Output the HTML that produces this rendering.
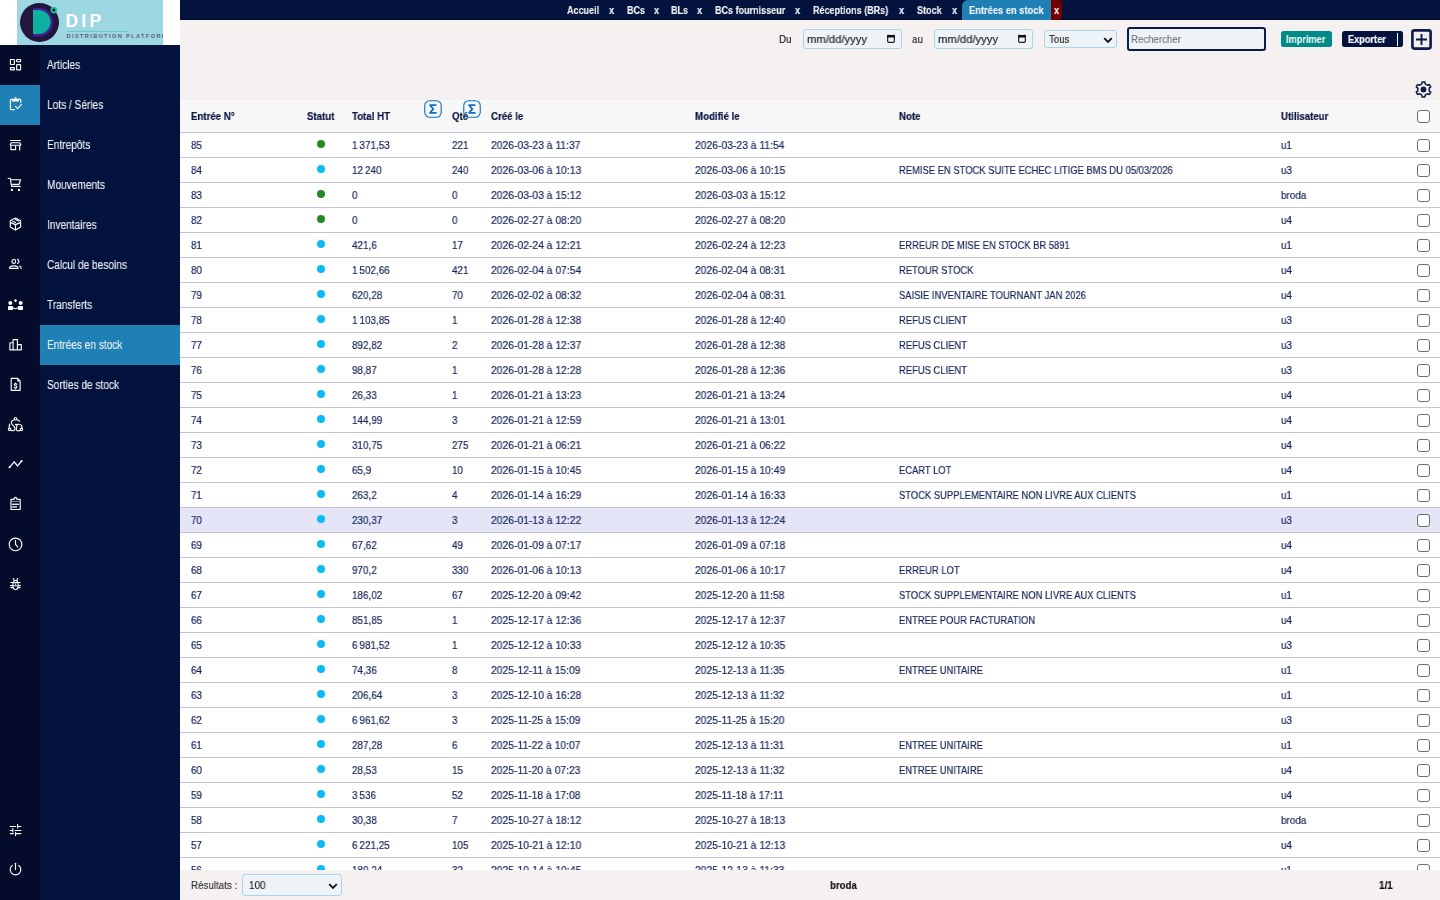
<!DOCTYPE html>
<html><head><meta charset="utf-8"><title>DIP - Entrées en stock</title>
<style>
*{box-sizing:border-box;margin:0;padding:0}
html,body{width:1440px;height:900px;overflow:hidden;background:#fff;font-family:"Liberation Sans",sans-serif;}
.abs{position:absolute}
.t{position:absolute;white-space:nowrap;display:block;transform-origin:0 50%;will-change:transform;-webkit-text-stroke-width:.15px}
#icons{position:absolute;left:0;top:45px;width:40px;height:855px;background:#050c2b}
#menu{position:absolute;left:40px;top:45px;width:140px;height:855px;background:#03133d}
#logo{position:absolute;left:0;top:0;width:180px;height:45px;background:#fff}
#logobox{position:absolute;left:17px;top:0;width:146px;height:45px;background:#9dd7e2;overflow:hidden}
.ic{position:absolute;left:5px;width:22px;height:22px}
.mi{position:absolute;left:0;width:140px;height:40px;color:#eceef4;font-size:12.5px;line-height:40px;-webkit-text-stroke:.15px #eceef4}
.mi span{position:absolute;left:6.5px;top:0;transform:scaleX(.81);transform-origin:0 50%;white-space:nowrap;will-change:transform}
#topbar{position:absolute;left:180px;top:0;width:1260px;height:20px;background:#03133d;border-bottom:1px solid #020a26}
.tab{position:absolute;top:0;height:20px;line-height:20px;color:#f2f2f6;font-weight:bold;font-size:11.5px;-webkit-text-stroke:.15px #f2f2f6;white-space:nowrap;transform-origin:0 50%;will-change:transform}
#toolbar{position:absolute;left:180px;top:20px;width:1260px;height:80px;background:#f5f1f0}
#thead{position:absolute;left:180px;top:100px;width:1260px;height:33px;background:#f7f7f7;border-bottom:1px solid #c6c2da}
.th{position:absolute;top:0;line-height:32px;font-size:11px;font-weight:bold;color:#0a1542;-webkit-text-stroke:.2px #0a1542;white-space:nowrap;transform:scaleX(.88);transform-origin:0 50%;will-change:transform}
#tbody{position:absolute;left:180px;top:133px;width:1260px;height:737px;overflow:hidden;background:#fff}
.r{position:absolute;left:0;width:1260px;height:25px;border-bottom:1px solid #c6c2da}
.r.hl{background:#e5e5f8}
.c{position:absolute;top:0;line-height:24px;font-size:11px;color:#16255a;will-change:transform;-webkit-text-stroke:.2px #16255a;white-space:nowrap;transform-origin:0 50%}
.n{transform:scaleX(.9)}
.d{transform:scaleX(.94)}
.u{transform:scaleX(.855)}
.dot{position:absolute;left:137px;top:7px;width:8px;height:8px;border-radius:50%}
.dg{background:#238a23}.db{background:#0bbcf4}
.cb{position:absolute;left:1237px;top:6px;width:13px;height:13px;border:1px solid #6e6e6e;border-radius:3px;background:#fff}
#footer{position:absolute;left:180px;top:870px;width:1260px;height:30px;background:#f5f1f0}
.inp{position:absolute;background:#edf3f7;border:1px solid #a9d3e6;border-radius:3px}
</style></head><body>

<div id="logo"><div id="logobox">
<svg width="146" height="45" viewBox="0 0 146 45" style="position:absolute;left:0;top:0">
<circle cx="22.5" cy="22.4" r="19.5" fill="#22163f"/>
<path d="M16 8H22A14.2 14.2 0 0 1 22 36.4H16Z" fill="#3a2490"/>
<path d="M16 9.9H21.5A12.05 12.05 0 0 1 21.5 34H16Z" fill="#0cb1a0"/>
<circle cx="36.8" cy="10.1" r="3.3" fill="#13c9a8"/>
<circle cx="36.8" cy="10.1" r="1.5" fill="#111"/>
<rect x="49" y="31" width="62.5" height="1" fill="#6cc9cc"/>
</svg>
<div class="abs" style="left:48.5px;top:10px;font-size:17.5px;line-height:22px;color:#fff;font-weight:bold;letter-spacing:3.2px;">DIP</div>
<div class="abs" style="left:49.5px;top:32px;font-size:5.6px;line-height:8px;color:#5a5c80;font-weight:bold;letter-spacing:1.4px;white-space:nowrap">DISTRIBUTION PLATFORM</div>
</div></div>

<div id="icons">
<div class="abs" style="left:0;top:40px;width:40px;height:40px;background:#1e80b4"></div>
<svg class="ic" style="top:10px" viewBox="0 0 22 22"><g stroke="#fff" fill="none" stroke-width="1.15" stroke-linecap="round" stroke-linejoin="round"><rect x="5.45" y="4.45" width="3.9" height="5.0" rx=".4"/><rect x="11.65" y="4.45" width="3.9" height="2.3" rx=".4"/><rect x="5.45" y="12.55" width="3.9" height="2.3" rx=".4"/><rect x="11.65" y="9.55" width="3.9" height="5.3" rx=".4"/></g></svg>
<svg class="ic" style="top:50px" viewBox="0 0 22 22"><g stroke="#fff" fill="none" stroke-width="1.15" stroke-linecap="round" stroke-linejoin="round"><path d="M7.2 4.3H6.2Q5.4 4.3 5.4 5.1V13.8Q5.4 14.6 6.2 14.6H9.5"/><path d="M13.9 4.3H15Q15.8 4.3 15.8 5.1V7.5"/><path d="M10.4 11.3L12.6 13.6L16.6 9.4"/></g><path fill="#fff" d="M6.9 3.8H9.4Q9.6 2 10.5 2Q11.4 2 11.6 3.8H14.2L14 6.6H7.1Z"/><circle cx="10.5" cy="3.5" r=".45" fill="#1e80b4"/></svg>
<svg class="ic" style="top:89px" viewBox="0 0 22 22"><g stroke="#fff" fill="none" stroke-width="1.15" stroke-linecap="round" stroke-linejoin="round"><path d="M5.6 6.5H15.4"/><path d="M6.2 8.7H14.8L15.8 10.4Q15.8 11.2 15 11.2H6Q5.3 11.2 5.3 10.4Z"/><path d="M5.9 11.3V15.6H10.6V12"/><path d="M14.7 11.3V16.1"/></g></svg>
<svg class="ic" style="top:129px" viewBox="0 0 22 22"><g stroke="#fff" fill="none" stroke-width="1.15" stroke-linecap="round" stroke-linejoin="round"><path d="M3.2 4.3L5.3 4.5L6.6 12.4H15.2"/><path d="M5.8 5.7H15.6L14.1 10.3H7.3"/></g><rect x="5.9" y="14.9" width="2" height="2" fill="#fff"/><rect x="13" y="14.9" width="2" height="2" fill="#fff"/></svg>
<svg class="ic" style="top:169px" viewBox="0 0 22 22"><g stroke="#fff" fill="none" stroke-width="1.15" stroke-linecap="round" stroke-linejoin="round"><path d="M10.5 4L15.6 6.8V13.1L10.5 16L5.3 13.1V6.8Z"/><path d="M5.6 8.6L10.5 10.6L15.3 8.6M10.5 10.6V15.8M7.7 7.3L10.6 8.6M10.5 5.6L13.4 7.1"/></g></svg>
<svg class="ic" style="top:209px" viewBox="0 0 22 22"><g stroke="#fff" fill="none" stroke-width="1.15" stroke-linecap="round" stroke-linejoin="round"><circle cx="8.8" cy="7.4" r="1.9"/><path d="M12.5 5.4A2.1 2.1 0 0 1 12.5 9.4"/><path d="M4.6 14.3Q4.3 11.9 8.8 11.9Q13.3 11.9 13.1 14.3Z"/><path d="M14.8 11.9Q16.2 12.6 16.2 14.5"/></g></svg>
<svg class="ic" style="top:249px" viewBox="0 0 22 22"><g fill="#fff"><circle cx="5.3" cy="8.9" r="2"/><circle cx="15.7" cy="8.9" r="2"/><rect x="3" y="12" width="5" height="4" rx=".4"/><rect x="13" y="12" width="5" height="4" rx=".4"/><path d="M10.5 5L12.2 6.5L10.5 8.3L8.8 6.5Z"/></g><path d="M8 13.6Q10.5 15.8 13 13.6" stroke="#fff" stroke-width="1.1" fill="none"/></svg>
<svg class="ic" style="top:289px" viewBox="0 0 22 22"><g stroke="#fff" fill="none" stroke-width="1.15" stroke-linecap="round" stroke-linejoin="round"><path d="M4.9 15.8V8.7H8.1V15.8ZM8.1 15.8V5.6H12.4V15.8ZM12.4 15.8V10.6H16.3V15.8Z"/></g></svg>
<svg class="ic" style="top:329px" viewBox="0 0 22 22"><g stroke="#fff" fill="none" stroke-width="1.15" stroke-linecap="round" stroke-linejoin="round"><path d="M6.2 4.4H12.6L15.1 7.2V16.3H6.2Z"/><path d="M11.8 10.4Q11.5 9.6 10.5 9.6Q9.3 9.6 9.3 10.6Q9.3 11.5 10.5 11.7Q11.8 11.9 11.8 13Q11.8 14 10.5 14Q9.5 14 9.2 13.3M10.5 9V9.6M10.5 14V14.8"/></g><path d="M12.3 4.3L15.3 7.4H12.3Z" fill="#fff"/></svg>
<svg class="ic" style="top:369px" viewBox="0 0 22 22"><g stroke="#fff" fill="none" stroke-width="1.15" stroke-linecap="round" stroke-linejoin="round"><circle cx="10.5" cy="4.7" r="1.25"/><circle cx="4.6" cy="15.3" r="1.25"/><circle cx="16.4" cy="15.3" r="1.25"/><path d="M9.2 5.9C7.2 6.2 6 7.5 6.5 9.4C7 11 9.5 12.3 9.9 14C10.2 15.5 9.8 16.5 8.5 16.7L5.7 16.4"/><path d="M11.8 5.9Q13.8 6 14.6 7.2"/><path d="M10.4 10.6C13 10.1 15.6 9.6 16.6 11.5Q17.2 12.8 16.6 14.1"/><path d="M12.1 10.8C11.7 12.5 11.3 14.5 11.4 16Q11.6 16.9 13 16.9L15.3 16.5"/><path d="M4.2 14.1Q3.9 11.5 4.8 10.2"/></g></svg>
<svg class="ic" style="top:408px" viewBox="0 0 22 22"><path d="M4.5 14.3L9.2 8.8L12.5 12.9L16.6 8" stroke="#fff" stroke-width="1.3" fill="none" stroke-linecap="round" stroke-linejoin="round"/><circle cx="4.5" cy="14.3" r="1" fill="#fff"/><circle cx="16.6" cy="8" r="1" fill="#fff"/></svg>
<svg class="ic" style="top:448px" viewBox="0 0 22 22"><g stroke="#fff" fill="none" stroke-width="1.15" stroke-linecap="round" stroke-linejoin="round"><path d="M6 6.4H9Q9.3 4.4 10.5 4.4Q11.7 4.4 12 6.4H15.2V16.5H6Z"/></g><g fill="#fff"><rect x="7.1" y="7.9" width="6.8" height=".9" opacity=".6"/><rect x="7.1" y="10.6" width="6.8" height="1.3"/><rect x="7.1" y="13.3" width="5" height="1.3"/></g></svg>
<svg class="ic" style="top:488px" viewBox="0 0 22 22"><g stroke="#fff" fill="none" stroke-width="1.15" stroke-linecap="round" stroke-linejoin="round"><circle cx="10.5" cy="11.4" r="6.3"/><path d="M10.5 7.6V11.3L12.7 13.8"/></g></svg>
<svg class="ic" style="top:528px" viewBox="0 0 22 22"><g stroke="#fff" fill="none" stroke-width="1.15" stroke-linecap="round" stroke-linejoin="round"><ellipse cx="10.5" cy="12.1" rx="2.6" ry="4.6"/><path d="M8.4 5.6L9.3 7.4M12.6 5.6L11.7 7.4M5.8 9.5H8M13 9.5H15.2M5.6 12.6H7.7M13.3 12.6H15.4M5.8 14.6H8M13 14.6H15.2M9.3 9.6H11.7M9.3 12.7H11.7"/></g><circle cx="10.5" cy="11.2" r=".6" fill="#fff"/></svg>
<svg class="ic" style="top:774px" viewBox="0 0 22 22"><g stroke="#fff" fill="none" stroke-width="1.15" stroke-linecap="round" stroke-linejoin="round"><path d="M5.3 7.5H10.7M12.7 7.5H15.8M12.6 5.6V9M5.3 11.5H7.5M10.2 11.5H15.8M7.8 9.5V13M5.3 14.6H8.4M10.6 14.6H15.8M10.6 13.2V16.6"/></g></svg>
<svg class="ic" style="top:813px" viewBox="0 0 22 22"><g stroke="#fff" fill="none" stroke-width="1.15" stroke-linecap="round" stroke-linejoin="round"><path d="M7.3 7.4A5.3 5.3 0 1 0 13.7 7.4"/><path d="M10.5 5.3V11.6"/></g></svg>
</div>
<div id="menu">
<div class="mi" style="top:0px;"><span>Articles</span></div>
<div class="mi" style="top:40px;"><span>Lots / Séries</span></div>
<div class="mi" style="top:80px;"><span>Entrepôts</span></div>
<div class="mi" style="top:120px;"><span>Mouvements</span></div>
<div class="mi" style="top:160px;"><span>Inventaires</span></div>
<div class="mi" style="top:200px;"><span>Calcul de besoins</span></div>
<div class="mi" style="top:240px;"><span>Transferts</span></div>
<div class="mi" style="top:280px;background:#1e80b4;"><span>Entrées en stock</span></div>
<div class="mi" style="top:320px;"><span>Sorties de stock</span></div>
</div>
<div id="topbar">
<div class="abs" style="left:782px;top:0;width:89px;height:20px;background:#1e80b4;border-radius:6px 0 0 0"></div>
<div class="abs" style="left:871px;top:0;width:11px;height:20px;background:#730000;border-radius:0 4px 4px 0"></div>
<div class="tab" style="left:386.8px;transform:scaleX(.785);">Accueil</div>
<div class="tab" style="left:429.4px;transform:scaleX(.8);">x</div>
<div class="tab" style="left:446.7px;transform:scaleX(.785);">BCs</div>
<div class="tab" style="left:473.5px;transform:scaleX(.8);">x</div>
<div class="tab" style="left:491.0px;transform:scaleX(.785);">BLs</div>
<div class="tab" style="left:517.2px;transform:scaleX(.8);">x</div>
<div class="tab" style="left:534.9px;transform:scaleX(.785);">BCs fournisseur</div>
<div class="tab" style="left:615.2px;transform:scaleX(.8);">x</div>
<div class="tab" style="left:632.8px;transform:scaleX(.785);">Réceptions (BRs)</div>
<div class="tab" style="left:719.0px;transform:scaleX(.8);">x</div>
<div class="tab" style="left:736.7px;transform:scaleX(.785);">Stock</div>
<div class="tab" style="left:771.6px;transform:scaleX(.8);">x</div>
<div class="tab" style="left:789.4px;transform:scaleX(.81)">Entrées en stock</div>
<div class="tab" style="left:874.2px;transform:scaleX(.8)">x</div>
</div>
<div id="toolbar">
<div class="t" style="left:599px;top:9px;line-height:20px;font-size:11.5px;color:#222;transform:scaleX(.85)">Du</div>
<div class="inp" style="left:623px;top:9px;width:99px;height:20px"><div class="t" style="left:3px;top:0;line-height:18px;font-size:11.5px;color:#222;transform:scaleX(.98)">mm/dd/yyyy</div><svg width="8" height="9" viewBox="0 0 8 9" style="position:absolute;right:6px;top:4px"><rect x=".65" y="1.9" width="6.7" height="6.4" rx="1" fill="none" stroke="#222" stroke-width="1.2"/><path d="M.1 3.6V1.6Q.1 .4 1.3 .8Q4 1.4 6.7 .8Q7.9 .4 7.9 1.6V3.6Z" fill="#111"/></svg></div>
<div class="t" style="left:732px;top:9px;line-height:20px;font-size:11.5px;color:#222;transform:scaleX(.85)">au</div>
<div class="inp" style="left:754px;top:9px;width:99px;height:20px"><div class="t" style="left:3px;top:0;line-height:18px;font-size:11.5px;color:#222;transform:scaleX(.98)">mm/dd/yyyy</div><svg width="8" height="9" viewBox="0 0 8 9" style="position:absolute;right:6px;top:4px"><rect x=".65" y="1.9" width="6.7" height="6.4" rx="1" fill="none" stroke="#222" stroke-width="1.2"/><path d="M.1 3.6V1.6Q.1 .4 1.3 .8Q4 1.4 6.7 .8Q7.9 .4 7.9 1.6V3.6Z" fill="#111"/></svg></div>
<div class="inp" style="left:864px;top:10px;width:73px;height:18px"><div class="t" style="left:4px;top:0;line-height:16px;font-size:11.5px;color:#222;transform:scaleX(.84)">Tous</div><svg width="10" height="7" viewBox="0 0 10 7" style="position:absolute;left:58px;top:5.5px"><path d="M1.2 1.2L5 5L8.8 1.2" fill="none" stroke="#111" stroke-width="1.8"/></svg></div>
<div class="abs" style="left:947px;top:7px;width:139px;height:24px;background:#edf3f7;border:2px solid #0a1a4a;border-radius:3px"><div class="t" style="left:2px;top:0;line-height:20px;font-size:11.5px;color:#777;transform:scaleX(.84)">Rechercher</div></div>
<div class="abs" style="left:1101px;top:11px;width:51px;height:16px;background:#008b89;border-radius:2.5px"><div class="t" style="left:4.5px;top:0;line-height:16px;font-size:11.5px;font-weight:bold;color:#e6f4f2;-webkit-text-stroke:.15px #e6f4f2;transform:scaleX(.8)">Imprimer</div></div>
<div class="abs" style="left:1162px;top:11px;width:61px;height:16px;background:#03133d;border-radius:2.5px"><div class="t" style="left:5.5px;top:0;line-height:16px;font-size:11.5px;font-weight:bold;color:#f6f6fa;-webkit-text-stroke:.2px #f6f6fa;transform:scaleX(.8)">Exporter</div><div class="abs" style="left:55px;top:1.5px;width:1px;height:13px;background:#fff"></div></div>
<svg class="abs" style="left:1231px;top:9px" width="21" height="21" viewBox="0 0 21 21"><rect x="1.4" y="1.4" width="18.2" height="18.2" rx="2" fill="#f0eeee" stroke="#0a1a4a" stroke-width="2.6"/><path d="M10.5 5V16M5 10.5H16" stroke="#0a1a4a" stroke-width="1.9"/></svg>
<svg class="abs" style="left:1232px;top:58px" width="22" height="22" viewBox="0 0 22 22"><path fill="none" stroke="#0a1a4a" stroke-width="1.5" stroke-linejoin="round" d="M8.70 6.65L9.78 5.86L10.16 3.92L12.84 3.92L13.22 5.86L14.30 6.65L15.52 7.19L17.40 6.55L18.74 8.87L17.25 10.17L17.10 11.50L17.25 12.83L18.74 14.13L17.40 16.45L15.52 15.81L14.30 16.35L13.22 17.14L12.84 19.08L10.16 19.08L9.78 17.14L8.70 16.35L7.48 15.81L5.60 16.45L4.26 14.13L5.75 12.83L5.90 11.50L5.75 10.17L4.26 8.87L5.60 6.55L7.48 7.19Z"/><circle cx="11.5" cy="11.5" r="2.9" fill="#0a1a4a"/></svg>
</div>
<div id="thead">
<div class="th" style="left:11px">Entrée N°</div>
<div class="th" style="left:127px">Statut</div>
<div class="th" style="left:172px">Total HT</div>
<div class="th" style="left:272px">Qté</div>
<div class="th" style="left:311px">Créé le</div>
<div class="th" style="left:515px">Modifié le</div>
<div class="th" style="left:719px">Note</div>
<div class="th" style="left:1101px">Utilisateur</div>
<svg class="abs" style="left:244px;top:0;z-index:3" width="18" height="18" viewBox="0 0 18 18"><rect x=".75" y=".75" width="16.5" height="16.5" rx="5" fill="none" stroke="#0b6fc6" stroke-width="1.1"/><path d="M5.4 4.2H12.4V6H7.9L10.5 9L7.9 12H12.6V13.8H5.3V12.2L8.1 9L5.4 5.8Z" fill="#0b6fc6"/></svg>
<svg class="abs" style="left:283px;top:0;z-index:3" width="18" height="18" viewBox="0 0 18 18"><rect x=".75" y=".75" width="16.5" height="16.5" rx="5" fill="none" stroke="#0b6fc6" stroke-width="1.1"/><path d="M5.4 4.2H12.4V6H7.9L10.5 9L7.9 12H12.6V13.8H5.3V12.2L8.1 9L5.4 5.8Z" fill="#0b6fc6"/></svg>
<div class="cb" style="top:10px"></div>
</div>
<div id="tbody">
<div class="r" style="top:0px"><span class="c n" style="left:11px">85</span><span class="dot dg"></span><span class="c n" style="left:172px">1&#8201;371,53</span><span class="c n" style="left:272px">221</span><span class="c d" style="left:311px">2026-03-23 à 11:37</span><span class="c d" style="left:515px">2026-03-23 à 11:54</span><span class="c n" style="left:1101px">u1</span><span class="cb"></span></div>
<div class="r" style="top:25px"><span class="c n" style="left:11px">84</span><span class="dot db"></span><span class="c n" style="left:172px">12&#8201;240</span><span class="c n" style="left:272px">240</span><span class="c d" style="left:311px">2026-03-06 à 10:13</span><span class="c d" style="left:515px">2026-03-06 à 10:15</span><span class="c u" style="left:719px">REMISE EN STOCK SUITE ECHEC LITIGE BMS DU 05/03/2026</span><span class="c n" style="left:1101px">u3</span><span class="cb"></span></div>
<div class="r" style="top:50px"><span class="c n" style="left:11px">83</span><span class="dot dg"></span><span class="c n" style="left:172px">0</span><span class="c n" style="left:272px">0</span><span class="c d" style="left:311px">2026-03-03 à 15:12</span><span class="c d" style="left:515px">2026-03-03 à 15:12</span><span class="c n" style="left:1101px">broda</span><span class="cb"></span></div>
<div class="r" style="top:75px"><span class="c n" style="left:11px">82</span><span class="dot dg"></span><span class="c n" style="left:172px">0</span><span class="c n" style="left:272px">0</span><span class="c d" style="left:311px">2026-02-27 à 08:20</span><span class="c d" style="left:515px">2026-02-27 à 08:20</span><span class="c n" style="left:1101px">u4</span><span class="cb"></span></div>
<div class="r" style="top:100px"><span class="c n" style="left:11px">81</span><span class="dot db"></span><span class="c n" style="left:172px">421,6</span><span class="c n" style="left:272px">17</span><span class="c d" style="left:311px">2026-02-24 à 12:21</span><span class="c d" style="left:515px">2026-02-24 à 12:23</span><span class="c u" style="left:719px">ERREUR DE MISE EN STOCK BR 5891</span><span class="c n" style="left:1101px">u1</span><span class="cb"></span></div>
<div class="r" style="top:125px"><span class="c n" style="left:11px">80</span><span class="dot db"></span><span class="c n" style="left:172px">1&#8201;502,66</span><span class="c n" style="left:272px">421</span><span class="c d" style="left:311px">2026-02-04 à 07:54</span><span class="c d" style="left:515px">2026-02-04 à 08:31</span><span class="c u" style="left:719px">RETOUR STOCK</span><span class="c n" style="left:1101px">u4</span><span class="cb"></span></div>
<div class="r" style="top:150px"><span class="c n" style="left:11px">79</span><span class="dot db"></span><span class="c n" style="left:172px">620,28</span><span class="c n" style="left:272px">70</span><span class="c d" style="left:311px">2026-02-02 à 08:32</span><span class="c d" style="left:515px">2026-02-04 à 08:31</span><span class="c u" style="left:719px">SAISIE INVENTAIRE TOURNANT JAN 2026</span><span class="c n" style="left:1101px">u4</span><span class="cb"></span></div>
<div class="r" style="top:175px"><span class="c n" style="left:11px">78</span><span class="dot db"></span><span class="c n" style="left:172px">1&#8201;103,85</span><span class="c n" style="left:272px">1</span><span class="c d" style="left:311px">2026-01-28 à 12:38</span><span class="c d" style="left:515px">2026-01-28 à 12:40</span><span class="c u" style="left:719px">REFUS CLIENT</span><span class="c n" style="left:1101px">u3</span><span class="cb"></span></div>
<div class="r" style="top:200px"><span class="c n" style="left:11px">77</span><span class="dot db"></span><span class="c n" style="left:172px">892,82</span><span class="c n" style="left:272px">2</span><span class="c d" style="left:311px">2026-01-28 à 12:37</span><span class="c d" style="left:515px">2026-01-28 à 12:38</span><span class="c u" style="left:719px">REFUS CLIENT</span><span class="c n" style="left:1101px">u3</span><span class="cb"></span></div>
<div class="r" style="top:225px"><span class="c n" style="left:11px">76</span><span class="dot db"></span><span class="c n" style="left:172px">98,87</span><span class="c n" style="left:272px">1</span><span class="c d" style="left:311px">2026-01-28 à 12:28</span><span class="c d" style="left:515px">2026-01-28 à 12:36</span><span class="c u" style="left:719px">REFUS CLIENT</span><span class="c n" style="left:1101px">u3</span><span class="cb"></span></div>
<div class="r" style="top:250px"><span class="c n" style="left:11px">75</span><span class="dot db"></span><span class="c n" style="left:172px">26,33</span><span class="c n" style="left:272px">1</span><span class="c d" style="left:311px">2026-01-21 à 13:23</span><span class="c d" style="left:515px">2026-01-21 à 13:24</span><span class="c n" style="left:1101px">u4</span><span class="cb"></span></div>
<div class="r" style="top:275px"><span class="c n" style="left:11px">74</span><span class="dot db"></span><span class="c n" style="left:172px">144,99</span><span class="c n" style="left:272px">3</span><span class="c d" style="left:311px">2026-01-21 à 12:59</span><span class="c d" style="left:515px">2026-01-21 à 13:01</span><span class="c n" style="left:1101px">u4</span><span class="cb"></span></div>
<div class="r" style="top:300px"><span class="c n" style="left:11px">73</span><span class="dot db"></span><span class="c n" style="left:172px">310,75</span><span class="c n" style="left:272px">275</span><span class="c d" style="left:311px">2026-01-21 à 06:21</span><span class="c d" style="left:515px">2026-01-21 à 06:22</span><span class="c n" style="left:1101px">u4</span><span class="cb"></span></div>
<div class="r" style="top:325px"><span class="c n" style="left:11px">72</span><span class="dot db"></span><span class="c n" style="left:172px">65,9</span><span class="c n" style="left:272px">10</span><span class="c d" style="left:311px">2026-01-15 à 10:45</span><span class="c d" style="left:515px">2026-01-15 à 10:49</span><span class="c u" style="left:719px">ECART LOT</span><span class="c n" style="left:1101px">u4</span><span class="cb"></span></div>
<div class="r" style="top:350px"><span class="c n" style="left:11px">71</span><span class="dot db"></span><span class="c n" style="left:172px">263,2</span><span class="c n" style="left:272px">4</span><span class="c d" style="left:311px">2026-01-14 à 16:29</span><span class="c d" style="left:515px">2026-01-14 à 16:33</span><span class="c u" style="left:719px">STOCK SUPPLEMENTAIRE NON LIVRE AUX CLIENTS</span><span class="c n" style="left:1101px">u1</span><span class="cb"></span></div>
<div class="r hl" style="top:375px"><span class="c n" style="left:11px">70</span><span class="dot db"></span><span class="c n" style="left:172px">230,37</span><span class="c n" style="left:272px">3</span><span class="c d" style="left:311px">2026-01-13 à 12:22</span><span class="c d" style="left:515px">2026-01-13 à 12:24</span><span class="c n" style="left:1101px">u3</span><span class="cb"></span></div>
<div class="r" style="top:400px"><span class="c n" style="left:11px">69</span><span class="dot db"></span><span class="c n" style="left:172px">67,62</span><span class="c n" style="left:272px">49</span><span class="c d" style="left:311px">2026-01-09 à 07:17</span><span class="c d" style="left:515px">2026-01-09 à 07:18</span><span class="c n" style="left:1101px">u4</span><span class="cb"></span></div>
<div class="r" style="top:425px"><span class="c n" style="left:11px">68</span><span class="dot db"></span><span class="c n" style="left:172px">970,2</span><span class="c n" style="left:272px">330</span><span class="c d" style="left:311px">2026-01-06 à 10:13</span><span class="c d" style="left:515px">2026-01-06 à 10:17</span><span class="c u" style="left:719px">ERREUR LOT</span><span class="c n" style="left:1101px">u4</span><span class="cb"></span></div>
<div class="r" style="top:450px"><span class="c n" style="left:11px">67</span><span class="dot db"></span><span class="c n" style="left:172px">186,02</span><span class="c n" style="left:272px">67</span><span class="c d" style="left:311px">2025-12-20 à 09:42</span><span class="c d" style="left:515px">2025-12-20 à 11:58</span><span class="c u" style="left:719px">STOCK SUPPLEMENTAIRE NON LIVRE AUX CLIENTS</span><span class="c n" style="left:1101px">u1</span><span class="cb"></span></div>
<div class="r" style="top:475px"><span class="c n" style="left:11px">66</span><span class="dot db"></span><span class="c n" style="left:172px">851,85</span><span class="c n" style="left:272px">1</span><span class="c d" style="left:311px">2025-12-17 à 12:36</span><span class="c d" style="left:515px">2025-12-17 à 12:37</span><span class="c u" style="left:719px">ENTREE POUR FACTURATION</span><span class="c n" style="left:1101px">u4</span><span class="cb"></span></div>
<div class="r" style="top:500px"><span class="c n" style="left:11px">65</span><span class="dot db"></span><span class="c n" style="left:172px">6&#8201;981,52</span><span class="c n" style="left:272px">1</span><span class="c d" style="left:311px">2025-12-12 à 10:33</span><span class="c d" style="left:515px">2025-12-12 à 10:35</span><span class="c n" style="left:1101px">u3</span><span class="cb"></span></div>
<div class="r" style="top:525px"><span class="c n" style="left:11px">64</span><span class="dot db"></span><span class="c n" style="left:172px">74,36</span><span class="c n" style="left:272px">8</span><span class="c d" style="left:311px">2025-12-11 à 15:09</span><span class="c d" style="left:515px">2025-12-13 à 11:35</span><span class="c u" style="left:719px">ENTREE UNITAIRE</span><span class="c n" style="left:1101px">u1</span><span class="cb"></span></div>
<div class="r" style="top:550px"><span class="c n" style="left:11px">63</span><span class="dot db"></span><span class="c n" style="left:172px">206,64</span><span class="c n" style="left:272px">3</span><span class="c d" style="left:311px">2025-12-10 à 16:28</span><span class="c d" style="left:515px">2025-12-13 à 11:32</span><span class="c n" style="left:1101px">u1</span><span class="cb"></span></div>
<div class="r" style="top:575px"><span class="c n" style="left:11px">62</span><span class="dot db"></span><span class="c n" style="left:172px">6&#8201;961,62</span><span class="c n" style="left:272px">3</span><span class="c d" style="left:311px">2025-11-25 à 15:09</span><span class="c d" style="left:515px">2025-11-25 à 15:20</span><span class="c n" style="left:1101px">u3</span><span class="cb"></span></div>
<div class="r" style="top:600px"><span class="c n" style="left:11px">61</span><span class="dot db"></span><span class="c n" style="left:172px">287,28</span><span class="c n" style="left:272px">6</span><span class="c d" style="left:311px">2025-11-22 à 10:07</span><span class="c d" style="left:515px">2025-12-13 à 11:31</span><span class="c u" style="left:719px">ENTREE UNITAIRE</span><span class="c n" style="left:1101px">u1</span><span class="cb"></span></div>
<div class="r" style="top:625px"><span class="c n" style="left:11px">60</span><span class="dot db"></span><span class="c n" style="left:172px">28,53</span><span class="c n" style="left:272px">15</span><span class="c d" style="left:311px">2025-11-20 à 07:23</span><span class="c d" style="left:515px">2025-12-13 à 11:32</span><span class="c u" style="left:719px">ENTREE UNITAIRE</span><span class="c n" style="left:1101px">u4</span><span class="cb"></span></div>
<div class="r" style="top:650px"><span class="c n" style="left:11px">59</span><span class="dot db"></span><span class="c n" style="left:172px">3&#8201;536</span><span class="c n" style="left:272px">52</span><span class="c d" style="left:311px">2025-11-18 à 17:08</span><span class="c d" style="left:515px">2025-11-18 à 17:11</span><span class="c n" style="left:1101px">u4</span><span class="cb"></span></div>
<div class="r" style="top:675px"><span class="c n" style="left:11px">58</span><span class="dot db"></span><span class="c n" style="left:172px">30,38</span><span class="c n" style="left:272px">7</span><span class="c d" style="left:311px">2025-10-27 à 18:12</span><span class="c d" style="left:515px">2025-10-27 à 18:13</span><span class="c n" style="left:1101px">broda</span><span class="cb"></span></div>
<div class="r" style="top:700px"><span class="c n" style="left:11px">57</span><span class="dot db"></span><span class="c n" style="left:172px">6&#8201;221,25</span><span class="c n" style="left:272px">105</span><span class="c d" style="left:311px">2025-10-21 à 12:10</span><span class="c d" style="left:515px">2025-10-21 à 12:13</span><span class="c n" style="left:1101px">u4</span><span class="cb"></span></div>
<div class="r" style="top:725px"><span class="c n" style="left:11px">56</span><span class="dot db"></span><span class="c n" style="left:172px">180,24</span><span class="c n" style="left:272px">32</span><span class="c d" style="left:311px">2025-10-14 à 10:45</span><span class="c d" style="left:515px">2025-12-13 à 11:33</span><span class="c n" style="left:1101px">u1</span><span class="cb"></span></div>
</div>
<div id="footer">
<div class="t" style="left:11px;top:4px;line-height:22px;font-size:11.5px;color:#333;transform:scaleX(.85)">Résultats :</div>
<div class="inp" style="left:62px;top:4px;width:100px;height:22px"><div class="t" style="left:6px;top:0;line-height:20px;font-size:11.5px;color:#222;transform:scaleX(.86)">100</div><svg width="10" height="7" viewBox="0 0 10 7" style="position:absolute;left:85px;top:7.5px"><path d="M1.2 1.2L5 5L8.8 1.2" fill="none" stroke="#111" stroke-width="1.8"/></svg></div>
<div class="t" style="left:650px;top:4px;line-height:22px;font-size:11.5px;font-weight:bold;color:#111;transform:scaleX(.84)">broda</div>
<div class="t" style="left:1198.5px;top:4px;line-height:22px;font-size:11.5px;font-weight:bold;color:#111;transform:scaleX(.86)">1/1</div>
</div>
</body></html>
